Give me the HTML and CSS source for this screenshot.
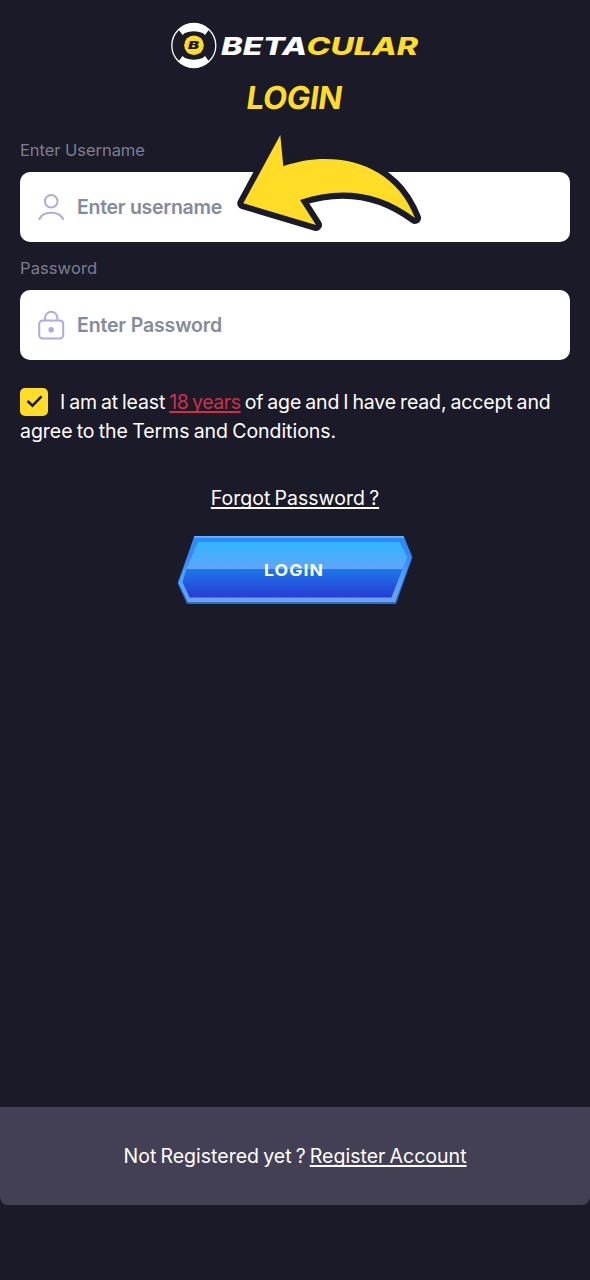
FILE: index.html
```html
<!DOCTYPE html>
<html lang="en">
<head>
<meta charset="utf-8">
<title>Betacular Login</title>
<link rel="stylesheet" href="styles.css">
</head>
<body>
<main class="page">
  <header class="brand">
    <svg class="logo" width="250" height="50" viewBox="170 20 250 50" role="img" aria-label="Betacular">
      <circle cx="193.800" cy="45.500" r="22" fill="none" stroke="#fff" stroke-width="1.300"/>
      <path d="M178.300 29.200A22.700 22.700 0 0 1 209.300 29.200L205 35L202.700 33Q193.800 29.500 184.900 33L182.600 35Z" fill="#fff"/>
      <path d="M178.300 61.800A22.700 22.700 0 0 0 209.300 61.800L205 56L202.700 58Q193.800 61.500 184.900 58L182.600 56Z" fill="#fff"/>
      <circle cx="194" cy="45.300" r="9.800" fill="#ffdc26"/>
      <text class="logo-b" x="188" y="49.200" textLength="11" lengthAdjust="spacingAndGlyphs">B</text>
      <text class="logo-word" x="221" y="54.800" textLength="86" lengthAdjust="spacingAndGlyphs" fill="#fff">BETA</text>
      <text class="logo-word" x="306.500" y="54.800" textLength="111.500" lengthAdjust="spacingAndGlyphs" fill="#ffdc26">CULAR</text>
    </svg>
    <h1 class="title">LOGIN</h1>
  </header>

  <form class="form">
    <label class="label label-user" for="user">Enter Username</label>
    <div class="field">
      <svg class="icon" width="28" height="30" viewBox="0 0 28 30" fill="none" stroke="#b0a9e6" stroke-width="2" stroke-linecap="round">
        <circle cx="14.200" cy="9.300" r="6.300"/>
        <path d="M2.500 27C6 18.500 22.300 18.500 26 27"/>
      </svg>
      <input class="input input-user" id="user" type="text" placeholder="Enter username">
    </div>
    <label class="label label-pass" for="pass">Password</label>
    <div class="field">
      <svg class="icon" width="28" height="30" viewBox="0 0 28 30" fill="none" stroke="#b0a9e6" stroke-width="2">
        <rect x="2.200" y="10.500" width="24" height="18" rx="3.500"/>
        <path d="M8 10.500V8a6.200 6.200 0 0 1 12.400 0V10.500"/>
        <circle cx="14.200" cy="19.700" r="2.800" fill="#b0a9e6" stroke="none"/>
      </svg>
      <input class="input input-pass" id="pass" type="password" placeholder="Enter Password">
    </div>
    <svg class="arrow" width="190" height="102" viewBox="234 132 190 102" aria-hidden="true">
      <path d="M280.300 135L283.300 166.300C331 149.500 393 160 415 218C378 190 339 187 300 200L316 225L243.300 203.300Z"/>
    </svg>

    <div class="terms">
      <div class="terms-row">
        <span class="check">
          <svg width="28" height="28" viewBox="0 0 28 28" fill="none" stroke="#1b1a29" stroke-width="2.600"><path d="M7.500 13L12.500 17.700L21.500 8.300"/></svg>
        </span>
        <span class="terms-first">I am at least <a class="age">18 years</a> of age and I have read, accept and</span>
      </div>
      <div class="terms-second">agree to the Terms and Conditions.</div>
    </div>

    <a class="forgot">Forgot Password ?</a>

    <button class="submit" type="button">
      <svg width="236" height="70" viewBox="177 535 236 70">
        <defs>
          <linearGradient id="edge" x1="0" y1="0" x2="0" y2="1">
            <stop offset="0" stop-color="#2c89ff"/><stop offset=".3" stop-color="#3289f5"/><stop offset=".65" stop-color="#55a0ff"/><stop offset="1" stop-color="#68a4ff"/>
          </linearGradient>
          <linearGradient id="shine" x1="0" y1="0" x2="0" y2="1">
            <stop offset="0" stop-color="#30b6ff"/><stop offset="1" stop-color="#60a5fa"/>
          </linearGradient>
          <linearGradient id="deep" x1="0" y1="0" x2="0" y2="1">
            <stop offset="0" stop-color="#1c79e8"/><stop offset="1" stop-color="#293bd6"/>
          </linearGradient>
        </defs>
        <path d="M194.500 536H403.500L412.500 557L396 604H187L177.500 583Z" fill="#2e6fc4"/>
        <path d="M194.500 536H403.500L411.800 557L395 602H188L178.500 583Z" fill="url(#edge)"/>
        <path d="M194.500 536H403.500L404.200 537.700H193.900Z" fill="#69b0ff"/>
        <path d="M198 542H399.500L407.300 557L402.500 569H186.500Z" fill="url(#shine)"/>
        <path d="M186.500 569H402.500L391.500 597.500H189.500L182.500 582Z" fill="url(#deep)"/>
        <text class="submit-text" x="264" y="575.500" textLength="60" lengthAdjust="spacingAndGlyphs">LOGIN</text>
      </svg>
    </button>
  </form>

  <footer class="register">
    <span class="register-text">Not Registered yet ? <a class="register-link">Register Account</a></span>
  </footer>
</main>
</body>
</html>
```
FILE: styles.css
```css
* { box-sizing: border-box; }
body {
  margin: 0;
  background: #1b1a29;
  color: #fff;
  font-family: Inter, "Open Sans", sans-serif;
  font-size: 19.5px;
}
.page {
  display: flex;
  flex-direction: column;
  height: 1280px;
  padding-bottom: 75px;
}
.brand {
  display: flex;
  flex-direction: column;
  align-items: center;
  padding-top: 20px;
}
.logo { display: block; }
.logo-word { font: italic 800 24.7px Inter, sans-serif; }
.logo-b { font: italic 900 10.5px Inter, sans-serif; fill: #1b1a29; }
.title {
  margin: 7px 0 0;
  height: 40px;
  color: #ffdc26;
  font-size: 31.5px;
  font-weight: 700;
  line-height: 41px;
  letter-spacing: -0.5px;
  transform: skewX(-8deg);
}
.form {
  position: relative;
  display: flex;
  flex: 1;
  flex-direction: column;
  padding: 23px 20px 0;
}
.label {
  height: 32px;
  color: #7c7e91;
  font-size: 16.5px;
  line-height: 21px;
  white-space: nowrap;
}
.label-user { letter-spacing: -0.05px; }
.label-pass { margin-top: 16px; letter-spacing: 0.1px; }
.field {
  display: flex;
  align-items: center;
  gap: 12px;
  height: 70px;
  padding-left: 17px;
  border-radius: 10px;
  background: #fff;
}
.input {
  flex: 1;
  height: 50px;
  padding: 0;
  border: 0;
  outline: 0;
  background: transparent;
  font: 600 19.5px Inter, sans-serif;
}
.input-user { letter-spacing: -0.28px; }
.input-pass { letter-spacing: -0.15px; }
.input::placeholder { color: #838b9e; opacity: 1; }
.arrow {
  position: absolute;
  left: 234px;
  top: 15px;
}
.arrow path {
  fill: #ffdc26;
  stroke: #1b1a29;
  stroke-width: 12px;
  stroke-linejoin: round;
  paint-order: stroke;
}
.terms {
  margin-top: 28px;
  line-height: 29px;
  white-space: nowrap;
}
.terms-row { display: flex; gap: 12px; height: 29px; }
.terms-first { letter-spacing: -0.14px; word-spacing: -1.3px; }
.terms-second { letter-spacing: -0.04px; word-spacing: -1.2px; }
.check {
  width: 28px;
  height: 28px;
  border-radius: 5px;
  background: #ffdc26;
}
.check svg { display: block; }
a { text-decoration: underline; text-decoration-thickness: 1.5px; text-underline-offset: 2px; text-decoration-skip-ink: none; }
.age { color: #cf3049; letter-spacing: -0.45px; }
.forgot { align-self: center; margin-top: 38px; line-height: 29px; white-space: nowrap; word-spacing: -1.2px; }
.submit {
  align-self: center;
  margin-top: 22px;
  padding: 0;
  border: 0;
  background: none;
}
.submit svg { display: block; }
.submit-text { font: 700 16.5px Inter, sans-serif; letter-spacing: 1px; fill: #fff; }
.register {
  display: flex;
  align-items: center;
  justify-content: center;
  height: 98px;
  border-radius: 0 0 8px 8px;
  background: #434055;
  white-space: nowrap;
}
.register-text { letter-spacing: 0.02px; word-spacing: -1.4px; }
```
